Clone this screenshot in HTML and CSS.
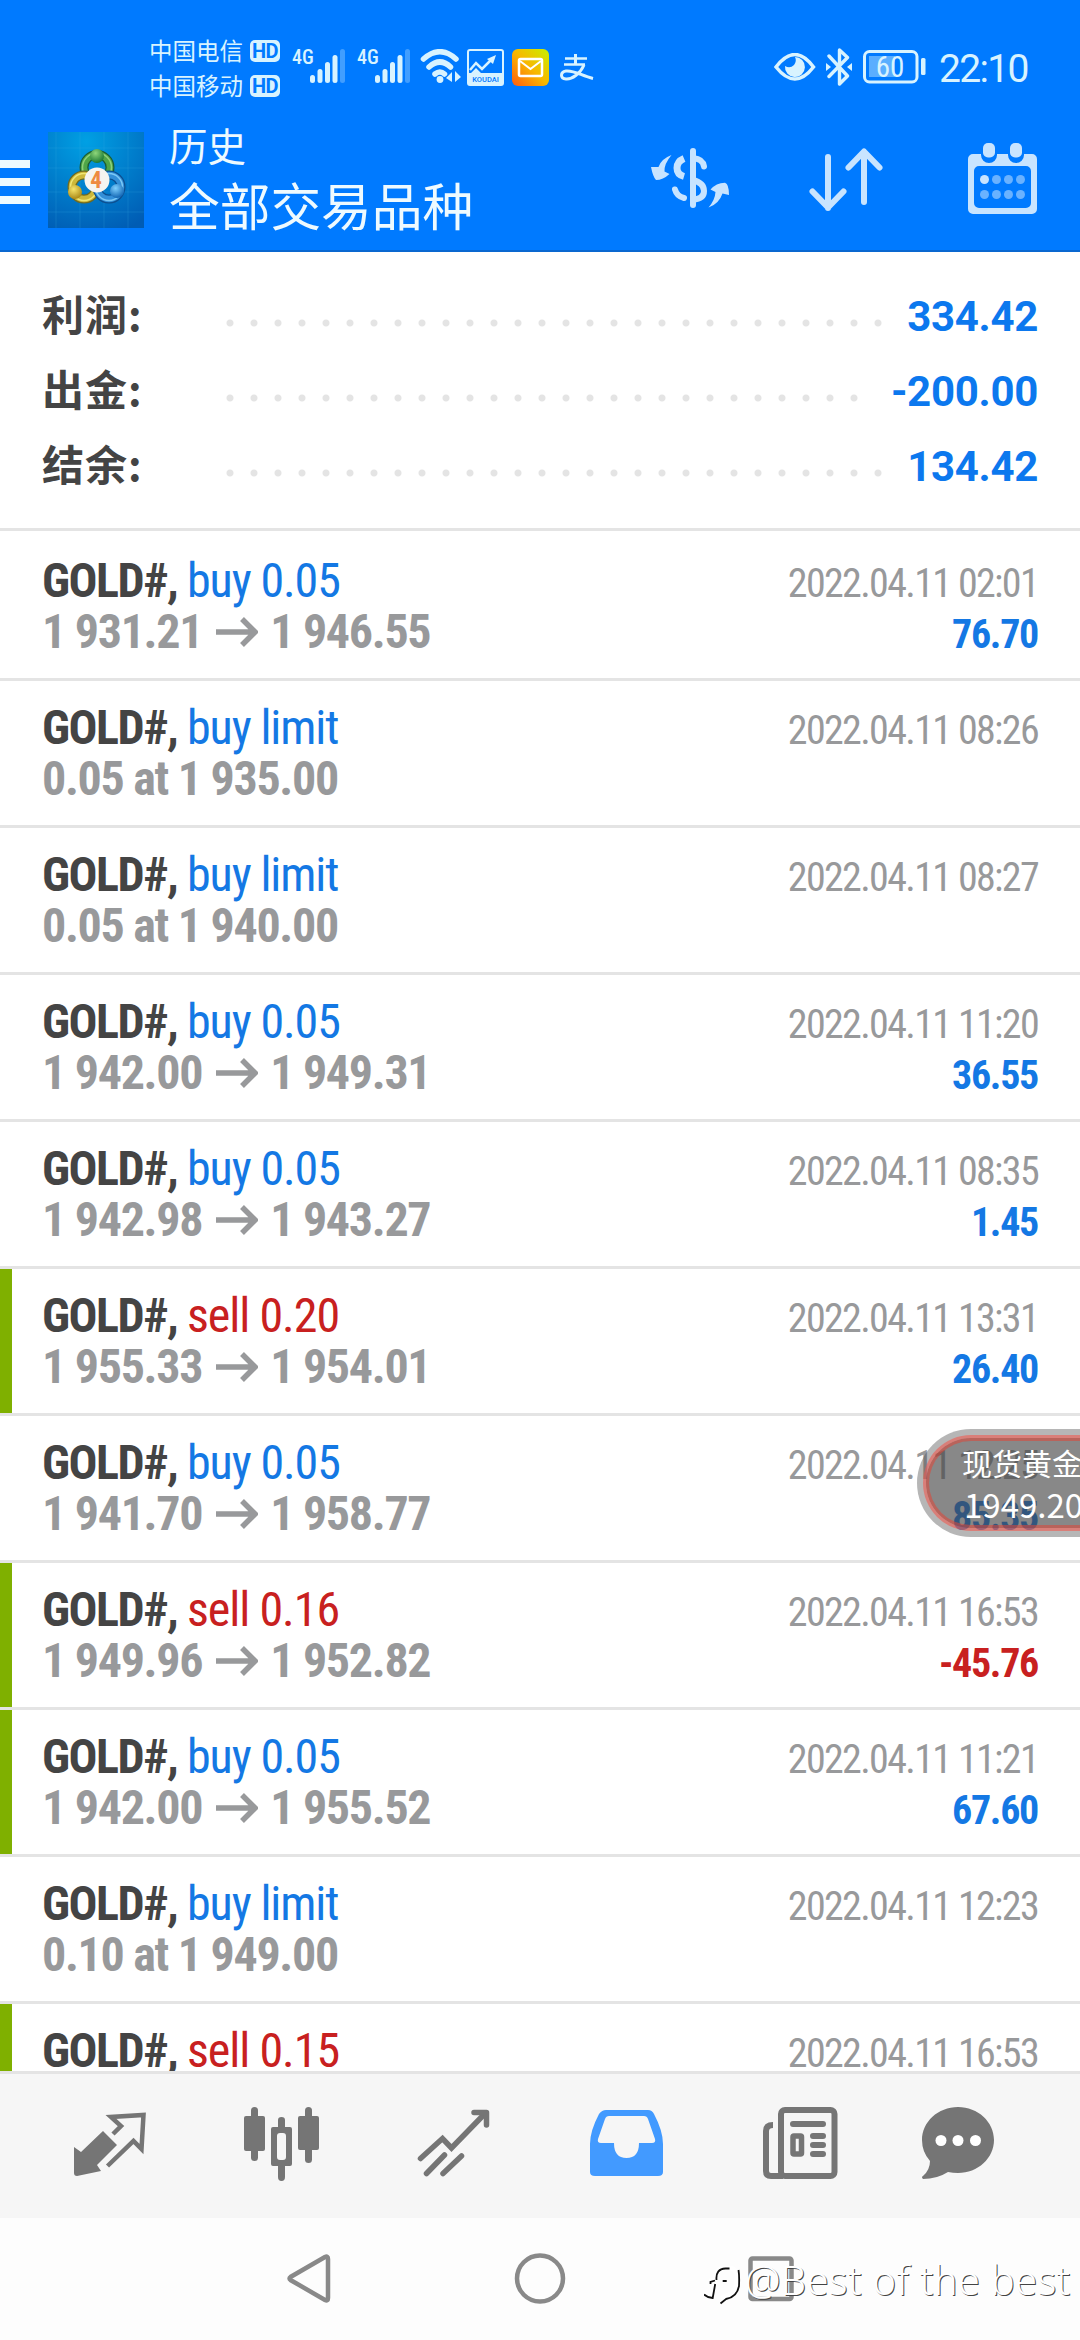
FILE: index.html
```html
<!DOCTYPE html>
<html lang="zh-CN">
<head>
<meta charset="utf-8">
<title>历史</title>
<link rel="stylesheet" href="styles.css">
</head>
<body>
<div class="screen">
  <header class="header">
    <div class="status">
      <div class="carriers">
        <div class="carrier">中国电信<span class="hd">HD</span></div>
        <div class="carrier">中国移动<span class="hd">HD</span></div>
      </div>
      <div class="signal"><span class="gen">4G</span><svg width="36" height="34" viewBox="0 0 36 34" fill="#d8f3ff"><rect x="0" y="26" width="5" height="8" rx="2.5"/><rect x="7.5" y="20" width="5" height="14" rx="2.5"/><rect x="15" y="13" width="5" height="21" rx="2.5"/><rect x="22.5" y="6" width="5" height="28" rx="2.5"/><rect x="30" y="0" width="5" height="34" rx="2.5" opacity=".3"/></svg></div>
      <div class="signal"><span class="gen">4G</span><svg width="36" height="34" viewBox="0 0 36 34" fill="#d8f3ff"><rect x="0" y="26" width="5" height="8" rx="2.5"/><rect x="7.5" y="20" width="5" height="14" rx="2.5"/><rect x="15" y="13" width="5" height="21" rx="2.5"/><rect x="22.5" y="6" width="5" height="28" rx="2.5"/><rect x="30" y="0" width="5" height="34" rx="2.5" opacity=".3"/></svg></div>
      <svg class="wifi" width="41" height="34" viewBox="420 49 41 34" fill="none" stroke="#d8f3ff" stroke-width="5.500" stroke-linecap="round"><path d="M423.500 59Q440 44.500 456 59M429 67Q440 57 450.500 67M435 74Q440 70 444.500 74" /><circle cx="440" cy="79.500" r="3.400" fill="#d8f3ff" stroke="none"/><path d="M446 78l6-6v10zM461 77l-6-6v11z" fill="#d8f3ff" stroke="none"/></svg>
      <svg class="koudai" width="37" height="37" viewBox="0 0 37 37"><rect x="1" y="1" width="35" height="35" rx="2" fill="none" stroke="#d8f3ff" stroke-width="2"/><path d="M1 24h3l5-5 5 5h22v12H1z" fill="#d8f3ff"/><path d="M3 21l6-7 6 6 10-10" fill="none" stroke="#d8f3ff" stroke-width="2.500"/><path d="M20 10l9-4-3 9z" fill="#d8f3ff"/><text x="18.500" y="33" text-anchor="middle" class="koudai-text">KOUDAI</text></svg>
      <svg class="mail" width="37" height="37" viewBox="0 0 37 37"><defs><linearGradient id="mg" x1="1" y1="0" x2="0" y2="1"><stop offset="0" stop-color="#c8f000"/><stop offset=".5" stop-color="#f8b800"/><stop offset="1" stop-color="#ff5a10"/></linearGradient></defs><rect width="37" height="37" rx="6" fill="url(#mg)"/><rect x="7" y="10" width="23" height="17" rx="1.500" fill="none" stroke="#fff" stroke-width="2.500"/><path d="M8 12l10.500 8L29 12" fill="none" stroke="#fff" stroke-width="2"/></svg>
      <svg class="zhi" width="34" height="27" viewBox="560 54 34 27" fill="none" stroke="#d8f3ff"><path d="M565 58.500h22M564 64.500h21" stroke-width="2.500"/><path d="M575.500 54v10" stroke-width="3"/><path d="M584 65C580 74 572 79.500 566 79C560 78.500 560 72 566 71C574 70 582 76 593 78.500" stroke-width="3"/></svg>
      <svg class="eye" width="42" height="28" viewBox="774 53 42 28"><path d="M776 67Q795 42 813.500 67Q795 91 776 67z" fill="none" stroke="#d8f3ff" stroke-width="3.500"/><path d="M795 57a10 10 0 1 1-10 9q5 3 9-1 3-4 1-8z" fill="#d8f3ff"/></svg>
      <svg class="bt" width="27" height="38" viewBox="826 48 27 38" fill="none" stroke="#d8f3ff" stroke-width="3.400" stroke-linejoin="round" stroke-linecap="round"><path d="M829 56l18.500 20-8 8V50l8 7.500-18.500 19"/><path d="M826 63l5 4-5 4zM852 63l-5 4 5 4z" fill="#d8f3ff" stroke="none"/></svg>
      <svg class="battery" width="64" height="34" viewBox="863 50 64 34"><rect x="864.500" y="51.500" width="52.500" height="30.500" rx="5" fill="none" stroke="#d8f3ff" stroke-width="3"/><rect x="869" y="56" width="26" height="21" fill="#5aaeff"/><rect x="921" y="58" width="4.500" height="17" rx="1.500" fill="#d8f3ff"/><text x="890" y="77" text-anchor="middle" class="battery-text">60</text></svg>
      <span class="clock">22:10</span>
    </div>
    <div class="appbar">
      <svg class="menu" width="30" height="44" viewBox="0 0 30 44" fill="#eefaff"><path d="M0 0h30v8H0zM0 18h30v8H0zM0 36h30v8H0z"/></svg>
      <svg class="logo" width="96" height="96" viewBox="0 0 96 96">
        <defs>
          <radialGradient id="bg" cx=".4" cy=".1" r="1"><stop offset="0" stop-color="#00a0e4"/><stop offset="1" stop-color="#005cb4"/></radialGradient>
          <radialGradient id="gr" cx=".4" cy=".3" r=".7"><stop offset="0" stop-color="#8fd67a"/><stop offset="1" stop-color="#1c7a35"/></radialGradient>
          <radialGradient id="ye" cx=".4" cy=".3" r=".7"><stop offset="0" stop-color="#f6e56c"/><stop offset="1" stop-color="#ab8a18"/></radialGradient>
          <radialGradient id="bl" cx=".4" cy=".3" r=".7"><stop offset="0" stop-color="#7fd0ff"/><stop offset="1" stop-color="#1266b4"/></radialGradient>
        </defs>
        <rect width="96" height="96" fill="url(#bg)"/>
        <path d="M8 0v96M32 0v96M56 0v96M80 0v96M0 16h96M0 36h96M0 60h96M0 80h96" stroke="#3ab0e8" stroke-opacity=".22" fill="none"/>
        <circle cx="49" cy="35.500" r="13" fill="none" stroke="#1b5c34" stroke-width="9"/><circle cx="49" cy="35.500" r="13" fill="none" stroke="#4fa548" stroke-width="6.500"/><circle cx="49" cy="35.500" r="14.500" fill="none" stroke="#8fd07a" stroke-width="1.500"/>
        <circle cx="36" cy="55" r="12" fill="none" stroke="#6f6a20" stroke-width="9"/><circle cx="36" cy="55" r="12" fill="none" stroke="#cdb83a" stroke-width="6.500"/><circle cx="36" cy="55" r="13.500" fill="none" stroke="#f0e676" stroke-width="1.500"/>
        <circle cx="61" cy="55" r="12" fill="none" stroke="#0c4f90" stroke-width="9"/><circle cx="61" cy="55" r="12" fill="none" stroke="#338fd8" stroke-width="6.500"/><circle cx="61" cy="55" r="13.500" fill="none" stroke="#7cc8f6" stroke-width="1.500"/>
        <circle cx="49" cy="24" r="7" fill="url(#gr)"/><circle cx="27" cy="60" r="7" fill="url(#ye)"/><circle cx="69" cy="59" r="7" fill="url(#bl)"/>
        <circle cx="49" cy="48" r="12.500" fill="#f6f4f0"/><text x="48" y="56" text-anchor="middle" class="logo-text">4</text>
      </svg>
      <div class="titles"><div class="title">历史</div><div class="subtitle">全部交易品种</div></div>
      <svg class="a-dollar" width="80" height="64" viewBox="650 147 80 64" fill="none" stroke="#c8e4ff" stroke-width="6" stroke-linecap="round"><path d="M693 151v54"/><path d="M684 158.500q-7 3-7 9.500t7 8.500" stroke-width="7" stroke-linecap="butt"/><path d="M684 198q-7-1.500-9-8.500" stroke-width="6"/><path d="M693 158q10 1 11 8.500M693 180q11 3 11 11t-11 8.500"/><path d="M671.500 155Q661 159 658.500 167L651 167Q653 177 656 180Q663 180 669.500 174L664.500 171.500Q664 164 671.500 155zM708.500 207.500Q719 204 722.500 193.500L729 195Q729 184 725 182.700Q716 183 710.500 189.500L715.500 192Q715 200 708.500 207.500z" fill="#c8e4ff" stroke="none"/></svg>
      <svg class="a-sort" width="76" height="66" viewBox="808 146 76 66" fill="none" stroke="#c8e4ff" stroke-width="6" stroke-linecap="round" stroke-linejoin="round"><path d="M828 157v51M812.500 191.500L828 207.500l15.500-16M864 202v-50M848.500 167.500L864 151.500l15.500 16"/></svg>
      <svg class="a-cal" width="70" height="72" viewBox="968 143 70 72"><path fill-rule="evenodd" fill="#c8e4ff" d="M973 154h8v1a7 7 0 0 0 16 0v-1h11v1a7 7 0 0 0 16 0v-1h8a5 5 0 0 1 5 5v50a5 5 0 0 1-5 5h-59a5 5 0 0 1-5-5v-50a5 5 0 0 1 5-5zM979 166a5 5 0 0 0-5 5v32a5 5 0 0 0 5 5h47a5 5 0 0 0 5-5v-32a5 5 0 0 0-5-5z"/><rect x="983" y="143" width="12" height="14.500" rx="5" fill="#c8e4ff"/><rect x="1010" y="143" width="12" height="14.500" rx="5" fill="#c8e4ff"/><circle cx="984.500" cy="179.500" r="4.500" fill="#c8e4ff"/><g fill="#6ab2ff"><circle cx="996.500" cy="179.500" r="4.500"/><circle cx="1008.500" cy="179.500" r="4.500"/><circle cx="1020.500" cy="179.500" r="4.500"/><circle cx="984.500" cy="194.500" r="4.500"/><circle cx="996.500" cy="194.500" r="4.500"/><circle cx="1008.500" cy="194.500" r="4.500"/><circle cx="1020.500" cy="194.500" r="4.500"/></g></svg>
    </div>
  </header>

  <section class="summary">
    <div class="sum"><span class="label">利润:</span><span class="dots"></span><span class="amount">334.42</span></div>
    <div class="sum"><span class="label">出金:</span><span class="dots"></span><span class="amount">-200.00</span></div>
    <div class="sum"><span class="label">结余:</span><span class="dots"></span><span class="amount">134.42</span></div>
  </section>

  <main class="deals" id="deals"></main>

  <nav class="tabs">
    <svg width="172" height="144" viewBox="24 2074 172 144" fill="#757575"><path d="M74 2147l7 5 22-21 14 14-20 20 4 6-24 5q-3 0-3-3z"/><path d="M113 2134l8-8-10-9 32.500-2-2 34-8-8-26 25" fill="none" stroke="#757575" stroke-width="4.500"/></svg>
    <svg width="172" height="144" viewBox="196 2074 172 144" fill="#757575"><rect x="244" y="2116" width="21" height="35" rx="2"/><rect x="251" y="2107" width="7" height="54" rx="3.500"/><rect x="298" y="2116" width="21" height="34" rx="2"/><rect x="305" y="2107" width="7" height="56" rx="3.500"/><path fill-rule="evenodd" d="M273 2127h17q2 0 2 2v35q0 2-2 2h-17q-2 0-2-2v-35q0-2 2-2zm7 6q-3 0-3 3v21q0 3 3 3h3q3 0 3-3v-21q0-3-3-3z"/><path d="M278 2128v-8q0-3 3.500-3t3.500 3v8zM278 2165v12q0 4 3.500 4t3.500-4v-12z"/></svg>
    <svg width="172" height="144" viewBox="368 2074 172 144" fill="none" stroke="#757575" stroke-width="5.500" stroke-linecap="round"><path d="M420.500 2158.500l22-20 9 9.500 33-34"/><path d="M474 2112.500h12.500v12.500" stroke-linejoin="round"/><path d="M426.500 2173.500l18-18.500M443 2173.500l18.500-17.500"/></svg>
    <svg width="172" height="144" viewBox="540 2074 172 144" fill="#429aff"><path fill-rule="evenodd" d="M606 2110h42q4 0 6 4 9 17 9 30v28q0 4-5 4h-63q-5 0-5-4v-28q0-13 9-30 3-4 7-4zm3 6q-3 0-4 3l-7 20q-1 4 3 4h13q0 15 12.500 15t12.500-15h13q4 0 3-4l-7-20q-1-3-4-3z"/></svg>
    <svg width="172" height="144" viewBox="712 2074 172 144" fill="none" stroke="#757575"><rect x="781" y="2110" width="53.500" height="66" rx="4" stroke-width="6"/><path d="M773 2125q-7 0-7 6v40q0 5 5 5h12" stroke-width="6"/><path d="M793 2124h30M813 2136h10M813 2145h10M813 2154h10" stroke-width="6" stroke-linecap="round"/><rect x="793" y="2136" width="8.500" height="18" rx="1" stroke-width="5.500"/></svg>
    <svg width="172" height="144" viewBox="884 2074 172 144"><path fill="#757575" d="M958 2107c20 0 36 15 36 33s-16 33-36 33q-5 0-10-1-11 7-25 7-2-2 0-3 7-6 7-15-8-9-8-21c0-18 16-33 36-33z"/><g fill="#fff"><circle cx="941" cy="2140.500" r="5.500"/><circle cx="958" cy="2140.500" r="5.500"/><circle cx="975.500" cy="2140.500" r="5.500"/></g></svg>
  </nav>

  <footer class="sysnav">
    <svg width="52" height="52" viewBox="283 2253 52 52"><path d="M325 2257L290.500 2277q-2 1.500 0 3L325 2300q3 1.500 3-2v-39q0-3.500-3-2z"/></svg>
    <svg width="52" height="52" viewBox="514 2253 52 52"><circle cx="540" cy="2278.500" r="23"/></svg>
    <svg width="52" height="52" viewBox="743 2253 52 52"><rect x="748.500" y="2258.500" width="41" height="40.500" rx="2"/></svg>
    <div class="mark"><svg width="37" height="46" viewBox="0 0 37 46"><path d="M5 21l5-1M0 34l7 2 4-15q0-12 8-13h8q6 2 6 8 0 16-9 19l-7 3"/><path class="ink" d="M6.500 24v-2l4.500-1.500M12.500 20q-1-11 9-11.500h4M0 34.500q4 3.500 8.700 3.500l2.500-14M18.700 21h4M34.500 10q1 6 .5 16-2 11-13 13l-5.500 4.500"/></svg><span>@Best of the best</span></div>
  </footer>

  <div class="float"><div class="float-in"><span>现货黄金</span><span class="quote">1949.20</span></div></div>
</div>
<script src="deals.js"></script>
</body>
</html>
```

FILE: deals.js
```javascript
const deals = [
  ["buy", "0.05", "1 931.21", "1 946.55", "02:01", "76.70"],
  ["buy", "limit", "0.05 at 1 935.00", "", "08:26", ""],
  ["buy", "limit", "0.05 at 1 940.00", "", "08:27", ""],
  ["buy", "0.05", "1 942.00", "1 949.31", "11:20", "36.55"],
  ["buy", "0.05", "1 942.98", "1 943.27", "08:35", "1.45"],
  ["sell", "0.20", "1 955.33", "1 954.01", "13:31", "26.40", true],
  ["buy", "0.05", "1 941.70", "1 958.77", "12:25", "85.35"],
  ["sell", "0.16", "1 949.96", "1 952.82", "16:53", "-45.76", true],
  ["buy", "0.05", "1 942.00", "1 955.52", "11:21", "67.60", true],
  ["buy", "limit", "0.10 at 1 949.00", "", "12:23", ""],
  ["sell", "0.15", "", "", "16:53", "", true]
];
const arrow = '<svg class="arrow" width="42" height="30" viewBox="0 0 42 30"><path d="M0 15h39M26 2l13 13-13 13"/></svg>';
document.getElementById("deals").innerHTML = deals.map(([side, size, from, to, time, profit, marked]) => `
  <div class="deal${marked ? " marked" : ""}">
    <div class="line"><span class="name"><b>GOLD#,</b> <span class="${side}">${side} ${size}</span></span><span class="date">2022.04.11 ${time}</span></div>
    <div class="line"><span class="price">${from}${to ? arrow + to : ""}</span><span class="profit${profit[0] === "-" ? " loss" : ""}">${profit}</span></div>
  </div>`).join("");
```

FILE: styles.css
```css
* { box-sizing: border-box; }
body { margin: 0; background: #fdfdfd; font-family: Roboto, "Noto Sans CJK SC", sans-serif; }
svg { display: block; flex: none; }
.screen { position: relative; width: 1080px; height: 2340px; overflow: hidden; display: flex; flex-direction: column; }

.header { height: 252px; flex: none; background: #007aff; border-bottom: 2px solid #0a68d0; color: #eefaff; }
.status { height: 120px; padding: 33px 0 0 149px; display: flex; align-items: flex-start; color: #d8f3ff; }
.carriers { width: 143px; }
.carrier { height: 35px; display: flex; align-items: center; font: 23.5px/35px "Noto Sans CJK SC", sans-serif; }
.hd { margin-left: 7px; width: 30px; height: 22px; border-radius: 5px; background: #d8f3ff; color: #007aff; font: bold 20px/22px Roboto, sans-serif; text-align: center; letter-spacing: -.5px; }
.signal { display: flex; width: 65px; margin-top: 16px; }
.gen { width: 18px; font: 500 20px/16px "Roboto Condensed", Roboto, sans-serif; font-stretch: 75%; }
.wifi { margin: 16px 0 0 -2px; }
.koudai { margin: 16px 0 0 6px; }
.koudai-text { font: 500 7.5px Roboto, sans-serif; fill: #007aff; }
.mail { margin: 16px 0 0 8px; }
.zhi { margin: 21px 0 0 11px; }
.eye { margin: 20px 0 0 180px; }
.bt { margin: 15px 0 0 10px; }
.battery { margin: 17px 0 0 10px; }
.battery-text { font: 29px "Roboto Condensed", Roboto, sans-serif; fill: #d8f3ff; }
.clock { margin: 15px 0 0 12px; font: 39px/42px Roboto, sans-serif; letter-spacing: -1.7px; white-space: nowrap; }

.appbar { display: flex; height: 130px; align-items: flex-start; }
.menu { margin-top: 40px; }
.logo { margin: 12px 0 0 18px; }
.logo-text { font: bold 23px "Roboto Condensed", Roboto, sans-serif; fill: #ee8a40; }
.titles { width: 480px; margin: -4px 0 0 25px; font-family: "Noto Sans CJK SC", sans-serif; }
.title { font-size: 38.5px; line-height: 56px; }
.subtitle { font-size: 50.7px; line-height: 64px; }
.a-dollar { margin: 27px 0 0 1px; }
.a-sort { margin: 26px 0 0 78px; }
.a-cal { margin: 23px 0 0 84px; }

.summary { height: 279px; flex: none; border-bottom: 3px solid #e4e4e4; padding: 27px 42px 0; background: #fff; }
.sum { display: flex; height: 75px; align-items: center; font-weight: bold; }
.label { width: 176px; height: 75px; font: bold 42px/67px "Noto Sans CJK SC", sans-serif; letter-spacing: 1px; color: #444; }
.dots { flex: 1; height: 24px; margin-right: 18px; background: radial-gradient(circle at 12px 18px, #e4e4e4 3px, transparent 4px) 0 0 / 24px 24px; }
.amount { font-size: 42px; line-height: 74px; letter-spacing: -.3px; color: #0c78ee; }

.deals { height: 1540px; flex: none; overflow: hidden; padding-top: 3px; background: #fff; font-family: "Roboto Condensed", Roboto, sans-serif; font-stretch: 75%; }
.deal { height: 147px; border-bottom: 3px solid #e4e4e4; padding: 21px 42px 0; }
.marked { background: linear-gradient(#7fb000, #7fb000) 0 0 / 12px 100% no-repeat; }
.line { display: flex; justify-content: space-between; align-items: baseline; height: 51px; line-height: 51px; font-size: 48px; letter-spacing: -1.3px; white-space: nowrap; }
.name b { color: #444; letter-spacing: -1.5px; }
.buy { color: #1478e4; letter-spacing: -1.1px; }
.sell { color: #c82020; letter-spacing: -1px; }
.date { font-size: 40px; letter-spacing: -1.65px; color: #98999b; }
.price { font-weight: bold; color: #98999b; }
.arrow { display: inline-block; vertical-align: 1px; margin: 0 12px 0 14px; fill: none; stroke: #98999b; stroke-width: 5.5px; }
.profit { font-size: 40px; font-weight: bold; color: #1478e4; }
.loss { color: #c82020; }

.tabs { height: 147px; flex: none; display: flex; padding-left: 24px; border-top: 3px solid #e4e4e4; background: #f6f6f6; }
.sysnav { height: 122px; flex: none; display: flex; padding: 35px 0 0 283px; gap: 179px; position: relative; fill: none; stroke: #898989; stroke-width: 4.5px; }
.mark { position: absolute; left: 704px; top: 42px; display: flex; gap: 4px; color: #fff; white-space: nowrap; font: 300 40px/40px "Noto Sans", sans-serif; letter-spacing: .3px; text-shadow: 1px 1px 0 #444; stroke: #fff; }
.mark .ink { stroke: #111; stroke-width: 1.8px; }

.float { position: absolute; left: 917px; top: 1429px; width: 220px; height: 108px; padding: 6px; border-radius: 54px; background: rgba(80,80,80,.42); }
.float-in { height: 96px; border: 3px solid rgba(240,90,80,.6); border-radius: 48px; background: rgba(60,60,60,.38); background-clip: padding-box; box-shadow: inset 0 0 0 3px rgba(225,70,55,.55); padding: 3px 0 0 36px; display: flex; flex-direction: column; color: #fff; font: 30px/42px "Noto Sans CJK SC", sans-serif; white-space: nowrap; }
.quote { margin-left: 2px; font-size: 33px; }
```
